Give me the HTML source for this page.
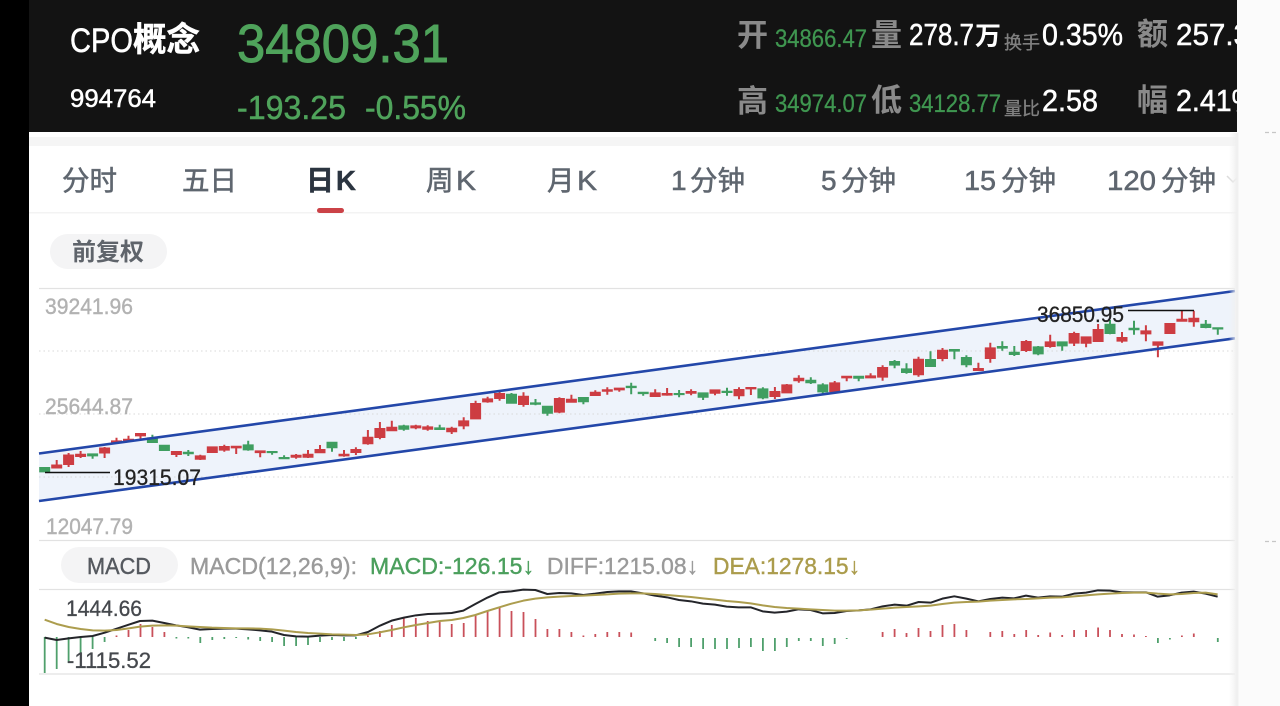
<!DOCTYPE html>
<html lang="zh"><head><meta charset="utf-8"><title>CPO概念</title>
<style>
html,body{margin:0;padding:0;background:#fff;width:1280px;height:706px;overflow:hidden}
svg{display:block;position:absolute;left:0;top:0;filter:blur(.3px)}
text{font-family:"Liberation Sans","Noto Sans CJK SC",sans-serif}
</style></head><body>
<svg width="1280" height="706" viewBox="0 0 1280 706" xmlns="http://www.w3.org/2000/svg">
<defs><linearGradient id="sh" x1="0" x2="1" y1="0" y2="0"><stop offset="0" stop-color="#f2f2f2" stop-opacity="0"/><stop offset="1" stop-color="#efefef"/></linearGradient></defs>
<rect width="1280" height="706" fill="#fff"/>
<rect x="0" y="0" width="29" height="706" fill="#000"/>
<rect x="29" y="0" width="1208" height="132" fill="#131313"/>
<rect x="29" y="137" width="1208" height="9" fill="#f5f5f5"/>
<rect x="29" y="212" width="1208" height="1.5" fill="#f3f3f3"/>

<!-- header -->
<g fill="#fff" stroke="#fff" stroke-width=".5">
<text x="70" y="52" font-size="34" textLength="63" lengthAdjust="spacingAndGlyphs">CPO</text>
<text x="133" y="51" font-size="33.5" font-weight="700" textLength="67" lengthAdjust="spacingAndGlyphs">概念</text>
<text x="70" y="107" font-size="25" textLength="86" lengthAdjust="spacingAndGlyphs">994764</text>
</g>
<g fill="#4fa35b" stroke="#4fa35b" stroke-width=".5">
<text x="237" y="62" font-size="54" stroke-width=".9" textLength="212" lengthAdjust="spacingAndGlyphs">34809.31</text>
<text x="237" y="119" font-size="33" textLength="109" lengthAdjust="spacingAndGlyphs">-193.25</text>
<text x="365" y="119" font-size="33" textLength="101" lengthAdjust="spacingAndGlyphs">-0.55%</text>
</g>
<g fill="#8a8a8a" font-size="31" font-weight="700">
<text x="737" y="46">开</text><text x="871" y="46">量</text><text x="1137" y="45">额</text>
<text x="737" y="112">高</text><text x="871" y="111">低</text><text x="1137" y="111">幅</text>
</g>
<g fill="#808080" font-size="18" stroke="#808080" stroke-width=".3">
<text x="1004" y="49">换手</text><text x="1004" y="115">量比</text>
</g>
<g fill="#3f9650" font-size="25" stroke="#3f9650" stroke-width=".3">
<text x="775" y="47" textLength="92" lengthAdjust="spacingAndGlyphs">34866.47</text>
<text x="775" y="112" textLength="92" lengthAdjust="spacingAndGlyphs">34974.07</text>
<text x="909" y="112" textLength="92" lengthAdjust="spacingAndGlyphs">34128.77</text>
</g>
<g fill="#fff" font-size="31" stroke="#fff" stroke-width=".5">
<text x="909" y="45" textLength="65" lengthAdjust="spacingAndGlyphs">278.7</text>
<text x="975" y="45" font-size="26" font-weight="700" stroke-width="0">万</text>
<text x="1042" y="45" textLength="81" lengthAdjust="spacingAndGlyphs">0.35%</text>
<text x="1176" y="45" textLength="74" lengthAdjust="spacingAndGlyphs">257.3</text>
<text x="1042" y="111" textLength="56" lengthAdjust="spacingAndGlyphs">2.58</text>
<text x="1176" y="111" textLength="81" lengthAdjust="spacingAndGlyphs">2.41%</text>
</g>

<!-- tabs -->
<g fill="#5f666f" font-size="27.5" stroke="#5f666f" stroke-width=".55">
<text x="62" y="190">分时</text>
<text x="182" y="190">五日</text>
<text x="426" y="190">周</text><text x="456" y="190" font-size="28" textLength="20" lengthAdjust="spacingAndGlyphs">K</text>
<text x="547" y="190">月</text><text x="577" y="190" font-size="28" textLength="20" lengthAdjust="spacingAndGlyphs">K</text>
<text x="671" y="190" font-size="28">1</text><text x="690" y="190">分钟</text>
<text x="821" y="190" font-size="28">5</text><text x="841" y="190">分钟</text>
<text x="964" y="190" font-size="28" textLength="32" lengthAdjust="spacingAndGlyphs">15</text><text x="1001" y="190">分钟</text>
<text x="1107" y="190" font-size="28" textLength="49" lengthAdjust="spacingAndGlyphs">120</text><text x="1161" y="190">分钟</text>
</g>
<g fill="#2b3440" font-size="28" font-weight="700" stroke="#2b3440" stroke-width=".4">
<text x="306" y="190">日</text><text x="336" y="190" textLength="20" lengthAdjust="spacingAndGlyphs">K</text>
</g>
<rect x="317" y="208" width="27" height="5" rx="2.5" fill="#cb4247"/>
<path d="M1227 176l6 6 6-6" fill="none" stroke="#dcdcdc" stroke-width="1.5"/>

<!-- pill -->
<rect x="50" y="234" width="117" height="35" rx="17.5" fill="#f4f4f5"/>
<text x="72" y="260" font-size="24" font-weight="700" fill="#5f646b">前复权</text>

<!-- grid -->
<path d="M39 288.5H1235M39 540.5H1235M39 589.5H1235M39 674H1235" stroke="#e2e2e2" stroke-width="1.3" fill="none"/>
<!-- channel -->
<polygon points="39,453.5 1235,291 1235,338.3 39,501" fill="#eef3fb"/>
<path d="M39 351H1235M39 414H1235M39 477H1235" stroke="#d8d8d8" stroke-width="1" stroke-dasharray="1.5 3" fill="none"/>

<g fill="#b2b2b2" font-size="22" stroke="#b2b2b2" stroke-width=".4">
<text x="45" y="314" textLength="88" lengthAdjust="spacingAndGlyphs">39241.96</text>
<text x="45" y="414" textLength="88" lengthAdjust="spacingAndGlyphs">25644.87</text>
<text x="46" y="534" textLength="87" lengthAdjust="spacingAndGlyphs">12047.79</text>
</g>

<!-- candles red -->
<path fill="#cd3c42" stroke="#cd3c42" stroke-width="2" d="
M56.7 460V468M52.2 465.5h9v2h-9z
M68.6 453V467M64.1 455.5h9v8.5h-9z
M80.6 451V458M76.1 454.7h9v1.3h-9z
M104.6 447V458M100.1 448.5h9v4h-9z
M116.5 437.7V443M112 441.4h9v1h-9z
M128.5 435.7V441M124 439.7h9v.6h-9z
M140.5 433.3V438.7M136 434h9v1.4h-9z
M176.4 451.3V457M171.9 452h9v2h-9z
M200.3 454.7V460M195.8 456.4h9v2.3h-9z
M212.3 446.7V452.7M207.8 447.4h9v4.6h-9z
M224.3 444.7V451.7M219.8 447h9v2.6h-9z
M236.2 446V454M231.7 446.7h9v.7h-9z
M260.2 450.7V457.3M255.7 451.4h9v.7h-9z
M296.1 454V458.7M291.6 455.7h9v1h-9z
M308 450V458M303.5 454.7h9v2h-9z
M320 445V453M315.5 450h9v2.3h-9z
M344 450V456.7M339.5 454.7h9v.7h-9z
M355.9 447.3V455M351.4 450h9v2h-9z
M367.9 430V444.7M363.4 437.7h9v5.6h-9z
M379.9 422V439.3M375.4 429h9v8h-9z
M391.8 420.7V431M387.3 427.7h9v2.6h-9z
M415.8 424.7V429.3M411.3 426.4h9v1h-9z
M427.7 425.3V430.7M423.2 427.4h9v1.3h-9z
M451.7 426.7V434M447.2 428.7h9v2.6h-9z
M463.7 417.3V429.3M459.2 421.4h9v4h-9z
M475.6 400.7V419M471.1 404h9v14.4h-9z
M487.6 396.7V402.7M483.1 399.4h9v2h-9z
M499.6 392V400.7M495.1 394h9v4h-9z
M523.5 392.3V406.7M519 396.7h9v7.3h-9z
M559.4 397.3V413.3M554.9 399h9v12.6h-9z
M571.4 394.7V402.3M566.9 399.7h9v2h-9z
M595.3 390.3V395.7M590.8 392.7h9v2.3h-9z
M607.3 387.3V394.7M602.8 390.2h9v.6h-9z
M619.3 388V391.7M614.8 388.6h9v.8h-9z
M655.2 389.3V396.7M650.7 393.4h9v2.6h-9z
M667.1 388V395.7M662.6 394h9v.6h-9z
M691.1 389.3V395.3M686.6 392h9v.7h-9z
M715 389.7V395.3M710.5 390.4h9v2.3h-9z
M739 387.3V399.3M734.5 390h9v5.3h-9z
M750.9 387.3V395M746.4 388h9v.4h-9z
M774.9 387V399M770.4 392h9v4h-9z
M786.8 384V393M782.3 385.4h9v7h-9z
M798.8 375.3V382.7M794.3 378.7h9v1.6h-9z
M834.7 381V392.7M830.2 383.4h9v7.6h-9z
M846.7 376V381.3M842.2 376.7h9v.7h-9z
M870.6 373.3V378M866.1 376.4h9v1h-9z
M882.6 365.3V380.7M878.1 368h9v8.6h-9z
M918.5 356.7V376.7M914 359.7h9v14.6h-9z
M942.5 348V361.3M938 350.7h9v7.3h-9z
M978.4 362.7V370.7M973.9 369h9v1h-9z
M990.3 342.7V362.7M985.8 348.4h9v9.6h-9z
M1026.2 340V352M1021.7 342h9v8h-9z
M1050.2 334.7V347.7M1045.7 342.4h9v3.6h-9z
M1074.1 331.7V346M1069.6 334h9v8.6h-9z
M1086.1 336.7V347.3M1081.6 337.4h9v5.3h-9z
M1098.1 324V342M1093.6 330h9v11h-9z
M1122 332V342.7M1117.5 338h9v2.6h-9z
M1145.9 325.3V341.3M1141.4 331.4h9v2h-9z
M1157.9 341.7V357.3M1153.4 342.4h9v2.3h-9z
M1169.9 323.3V333.7M1165.4 324h9v9h-9z
M1181.9 310.7V321.3M1177.4 319.7h9v1h-9z
M1193.8 310.7V326.7M1189.3 318.7h9v2.6h-9z"/>
<!-- candles green -->
<path fill="#3f9e60" stroke="#3f9e60" stroke-width="2" d="
M44.7 467.3V472M40.2 468h9v3.4h-9z
M92.6 453.7V458.7M88.1 454.4h9v1h-9z
M152.4 434.7V442.7M147.9 438.4h9v3.6h-9z
M164.4 445V450.7M159.9 445.7h9v4.3h-9z
M188.3 450V456M183.8 452.7h9v.6h-9z
M248.2 440.7V450.7M243.7 445.4h9v4h-9z
M272.1 451.3V454.7M267.6 452h9v.1h-9z
M284.1 455.3V459M279.6 458h9v.3h-9z
M332 442V451.7M327.5 442.7h9v4.6h-9z
M403.8 424.7V430.7M399.3 426.4h9v2.3h-9z
M439.7 424.7V430M435.2 428.4h9v.6h-9z
M511.5 393V403.3M507 394.7h9v8h-9z
M535.5 399V405.3M531 403.4h9v.3h-9z
M547.4 406V415.7M542.9 406.7h9v6h-9z
M583.4 397.3V404.3M578.9 398h9v3.3h-9z
M631.2 382.7V394.3M626.7 386.7h9v.4h-9z
M643.2 392V395.7M638.7 392.7h9v.4h-9z
M679.1 390V397.3M674.6 394h9v.1h-9z
M703.1 392.7V400M698.6 393.4h9v3.3h-9z
M727 387.7V395.7M722.5 391.7h9v.3h-9z
M762.9 387.3V399.3M758.4 389.4h9v8h-9z
M810.8 377.3V384M806.3 380.7h9v1.6h-9z
M822.8 383.3V394M818.3 385.4h9v6h-9z
M858.7 376V381.3M854.2 376.7h9v1h-9z
M894.6 360V368.3M890.1 362h9v2.6h-9z
M906.5 363.3V373.7M902 369.4h9v2.6h-9z
M930.5 351.3V366.7M926 360h9v6h-9z
M954.4 349.3V359.3M949.9 350h9v.6h-9z
M966.4 355.3V367.3M961.9 358h9v6.3h-9z
M1002.3 341.3V350.7M997.8 347h9v.6h-9z
M1014.3 346V356M1009.8 352.7h9v1.3h-9z
M1038.2 346V355.3M1033.7 347.4h9v6h-9z
M1062.2 341.7V350.7M1057.7 342.4h9v3h-9z
M1110 320V334.3M1105.5 324.7h9v8.3h-9z
M1134 320.7V334.7M1129.5 328.7h9v.6h-9z
M1205.8 320V328.3M1201.3 324.7h9v2.3h-9z
M1217.8 328V334.7M1213.3 328.3h9v.2h-9z"/>

<!-- channel lines -->
<path d="M39 453.5L1235 291M39 501L1235 338.3" fill="none" stroke="#2347a9" stroke-width="2.6"/>

<!-- extrema labels -->
<path d="M45 472.5H110M1128 310.5H1194" stroke="#111" stroke-width="1.6" fill="none"/>
<text x="113" y="485" font-size="22.5" fill="#222" stroke="#222" stroke-width=".3" textLength="88" lengthAdjust="spacingAndGlyphs">19315.07</text>
<text x="1037" y="322" font-size="22.5" fill="#222" stroke="#222" stroke-width=".3" textLength="87" lengthAdjust="spacingAndGlyphs">36850.95</text>

<!-- MACD head -->
<rect x="61" y="547" width="117" height="36" rx="18" fill="#f4f4f5"/>
<g font-size="23" stroke-width=".4">
<text x="87" y="574" fill="#55595f" stroke="#55595f" textLength="64" lengthAdjust="spacingAndGlyphs">MACD</text>
<text x="190" y="574" fill="#9a9a9a" stroke="#9a9a9a" textLength="167" lengthAdjust="spacingAndGlyphs">MACD(12,26,9):</text>
<text x="370" y="574" fill="#4b9f5d" stroke="#4b9f5d" textLength="164" lengthAdjust="spacingAndGlyphs">MACD:-126.15↓</text>
<text x="547" y="574" fill="#9a9a9a" stroke="#9a9a9a" textLength="151" lengthAdjust="spacingAndGlyphs">DIFF:1215.08↓</text>
<text x="713" y="574" fill="#ab9c4c" stroke="#ab9c4c" textLength="147" lengthAdjust="spacingAndGlyphs">DEA:1278.15↓</text>
</g>

<!-- MACD bars -->
<path fill="none" stroke="#c9505a" stroke-width="1.8" d="
M116.5 637v-1.5M128.5 637v-7M140.5 637v-13M152.4 637v-10M164.4 637v-5
M367.9 637v-1.5M379.9 637v-6M391.8 637v-12M403.8 637v-19M415.8 637v-19M427.7 637v-16M439.7 637v-15M451.7 637v-13M463.7 637v-14M475.6 637v-22M487.6 637v-26M499.6 637v-29M511.5 637v-26M523.5 637v-25M535.5 637v-18M547.4 637v-8M559.4 637v-8M571.4 637v-5M583.4 637v-1.5M595.3 637v-3M607.3 637v-5M619.3 637v-5M631.2 637v-4.5
M882.6 637v-5M894.6 637v-8M906.5 637v-4M918.5 637v-9M930.5 637v-6M942.5 637v-12M954.4 637v-13M966.4 637v-7M990.3 637v-5M1002.3 637v-6M1014.3 637v-3M1026.2 637v-7M1038.2 637v-2M1050.2 637v-4.5M1062.2 637v-2M1074.1 637v-7M1086.1 637v-7M1098.1 637v-9.5M1110 637v-7M1122 637v-3M1134 637v-2.5M1145.9 637v-1M1181.9 637v-1.5M1193.8 637v-3.5"/>
<path fill="none" stroke="#4fa06c" stroke-width="1.8" d="
M44.7 637v36M56.7 637v32M68.6 637v26M80.6 637v18M92.6 637v12M104.6 637v5
M176.4 637v1.5M188.3 637v1.5M200.3 637v6M212.3 637v3M224.3 637v2M236.2 637v1M248.2 637v2.5M260.2 637v4M272.1 637v5M284.1 637v9M296.1 637v9M308 637v8M320 637v5M332 637v3M344 637v4M355.9 637v2
M655.2 638v3M667.1 638v5M679.1 638v9M691.1 638v9M703.1 638v11M715 638v11M727 638v11M739 638v10M750.9 638v9M762.9 638v13M774.9 638v13M786.8 638v9M798.8 638v3M810.8 638v3M822.8 638v8M834.7 638v6M846.7 638v1
M1157.9 638v5M1169.9 638v1.5M1217.8 638v4"/>

<!-- MACD lines -->
<g fill="none" stroke="#24252a" stroke-width="6" stroke-linejoin="round">
<polyline transform="translate(30 540) scale(.3333)" points="44,293 80,300 116,295 152,291 188,288 224,278 260,266 296,254 330,243 367,242 403,249 438,256 474,262 510,269 546,267 582,266 618,266 654,268 690,271 726,275 762,285 798,289 834,290 870,287 906,285 942,286 978,286 1014,276 1050,257 1085,242 1122,233 1158,226 1194,222 1230,221"/>
<polyline transform="translate(430 540) scale(.3333)" points="29,221 65,219 100,212 136,192 172,173 208,157 244,154 280,149 316,150 352,162 388,159 424,160 460,165 496,161 532,156 567,154 603,154 639,160 675,167 711,172 747,180 783,184 819,191 855,194 890,200 926,202 962,202 998,214 1034,218 1070,215 1106,208 1142,210 1178,220 1214,219 1250,213 1286,211 1322,208"/>
<polyline transform="translate(860 540) scale(.3333)" points="32,208 68,199 104,194 140,197 176,186 212,188 247,176 283,169 319,176 355,184 391,177 427,173 462,175 498,167 534,173 570,169 606,170 642,161 678,158 714,151 750,152 786,157 822,157 858,157 893,170 929,166 965,158 1001,155 1037,161 1073,170"/>
</g>
<g fill="none" stroke="#ac9d4e" stroke-width="6" stroke-linejoin="round">
<polyline transform="translate(30 540) scale(.3333)" points="44,239 80,252 116,261 152,267 188,271 224,272 260,270 296,265 330,260 367,257 403,256 438,257 474,259 510,261 546,263 582,264 618,265 654,265 690,266 726,268 762,272 798,276 834,279 870,281 906,283 942,284 978,285 1014,283 1050,277 1085,270 1122,262 1158,255 1194,249 1230,243"/>
<polyline transform="translate(430 540) scale(.3333)" points="29,243 65,240 100,234 136,225 172,213 208,202 244,191 280,182 316,176 352,172 388,170 424,168 460,167 496,165 532,163 567,161 603,160 639,160 675,162 711,165 747,168 783,171 819,175 855,179 890,183 926,186 962,190 998,196 1034,201 1070,204 1106,206 1142,208 1178,210 1214,212 1250,212 1286,211 1322,209"/>
<polyline transform="translate(860 540) scale(.3333)" points="32,209 68,206 104,203 140,201 176,199 212,197 247,192 283,188 319,186 355,185 391,182 427,180 462,178 498,177 534,175 570,173 606,172 642,169 678,166 714,163 750,161 786,159 822,158 858,158 893,161 929,163 965,162 1001,159 1037,158 1073,163"/>
</g>
<text x="66" y="616" font-size="22.5" fill="#45484d" stroke="#45484d" stroke-width=".3" textLength="76" lengthAdjust="spacingAndGlyphs">1444.66</text>
<text x="67" y="668" font-size="22.5" fill="#45484d" stroke="#45484d" stroke-width=".3" textLength="84" lengthAdjust="spacingAndGlyphs">-1115.52</text>

<!-- right panel -->
<rect x="1229" y="133" width="8" height="573" fill="url(#sh)"/>
<rect x="1237" y="0" width="43" height="706" fill="#fbfbfb"/>
<rect x="1237" y="133" width="1.5" height="573" fill="#f0f0f0"/>
<path d="M1265 132.5h4M1272 132.5h4M1265 541.5h4M1272 541.5h4" stroke="#c6c6c6" stroke-width="1.2" fill="none"/>
</svg>
</body></html>
